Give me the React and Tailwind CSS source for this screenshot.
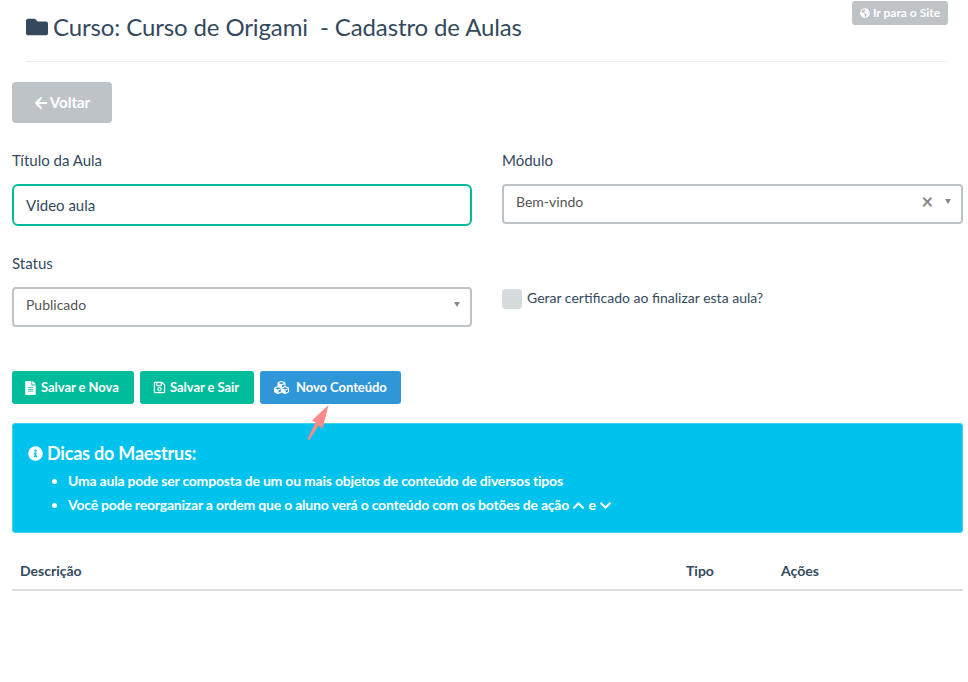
import { FaFolder, FaArrowLeft, FaGlobeAmericas, FaFileAlt, FaRegSave, FaCubes, FaInfoCircle, FaChevronUp, FaChevronDown } from 'react-icons/fa'

function Field({ label, className = '', children }) {
  return (
    <div className={className}>
      <label className="block text-[15px] leading-[20px] text-[#34495e] mb-[14px]">{label}</label>
      {children}
    </div>
  )
}

function SelectBox({ value, clearable = false }) {
  return (
    <div className="h-[40px] border-2 border-[#bdc3c7] rounded-[4px] flex items-center pl-3 pr-[5px] pb-[6px] text-[14px] text-[#555]">
      <span className="flex-1">{value}</span>
      {clearable && <span className="text-[20px] font-bold text-[#888] mr-[12px] leading-none">×</span>}
      <span className="w-0 h-0 border-x-[3.5px] border-x-transparent border-t-[5px] border-t-[#888] mr-[5px]" />
    </div>
  )
}

function ActionButton({ icon, label, className = '' }) {
  return (
    <button className={`h-[33px] rounded-[3px] text-white text-[13px] font-bold tracking-[-0.05px] flex items-center ${className}`}>
      {icon}
      {label}
    </button>
  )
}

export default function App() {
  return (
    <div className="relative w-[968px] h-[682px] bg-white overflow-hidden font-['Lato','Open_Sans',sans-serif] text-[#34495e]">
      {/* Header */}
      <div className="ml-[26px] mr-[20px] h-[62px] border-b border-[#eeeeee] flex items-start justify-between">
        <h1 className="mt-[12px] flex items-center text-[24px] leading-[30px] font-normal tracking-[-0.12px] whitespace-pre">
          <FaFolder className="w-[22px] h-[22px] mr-[5px]" />
          Curso: Curso de Origami  - Cadastro de Aulas
        </h1>
        <button className="mt-[1px] w-[96px] h-[24px] rounded-[3px] bg-[#bdc3c7] text-white text-[12px] font-bold flex items-center justify-center gap-[3px]">
          <FaGlobeAmericas className="w-[10px] h-[10px]" />
          Ir para o Site
        </button>
      </div>

      <div className="pl-[12px] pr-[5px]">
        <button className="mt-[20px] w-[100px] h-[41px] rounded-[4px] bg-[#bdc3c7] text-white text-[15px] font-bold flex items-center justify-center gap-[2px]">
          <FaArrowLeft className="w-[14px] h-[14px]" />
          Voltar
        </button>

        {/* Form */}
        <div className="mt-[27px] flex gap-[30px]">
          <Field label="Título da Aula" className="w-[460px]">
            <div className="h-[42px] border-2 border-[#00bc9b] rounded-[6px] flex items-center px-3 text-[15px] text-[#34495e]">Video aula</div>
          </Field>
          <Field label="Módulo" className="flex-1">
            <SelectBox value="Bem-vindo" clearable />
          </Field>
        </div>

        <div className="mt-[27px] flex gap-[30px]">
          <Field label="Status" className="w-[460px]">
            <SelectBox value="Publicado" />
          </Field>
          <div className="flex-1 flex items-start gap-[5px] pt-[36px] h-[64px] text-[14px] leading-[20px]">
            <span className="w-[20px] h-[20px] rounded-[4px] bg-[#d6dbdd]" />
            <span className="-mt-[1px]">Gerar certificado ao finalizar esta aula?</span>
          </div>
        </div>

        {/* Buttons */}
        <div className="mt-[44px] flex gap-[6px]">
          <ActionButton className="w-[122px] bg-[#00bc9b] pl-[12px] gap-[4px]" icon={<FaFileAlt className="w-[13px] h-[14px]" />} label="Salvar e Nova" />
          <ActionButton className="w-[114px] bg-[#00bc9b] pl-[13px] gap-[4px]" icon={<FaRegSave className="w-[13px] h-[13px]" />} label="Salvar e Sair" />
          <ActionButton className="w-[141px] bg-[#2f97d8] pl-[13px] gap-[6px]" icon={<FaCubes className="w-[17px] h-[15px]" />} label="Novo Conteúdo" />
        </div>

        {/* Tips */}
        <div className="mt-[19px] h-[110px] rounded-[3px] bg-[#00c3ed] border border-[#40d0f0] text-white pl-[15px] pt-[16px]">
          <h4 className="flex items-center gap-[4px] text-[18px] leading-[26px] font-bold tracking-[-0.2px]">
            <FaInfoCircle className="w-[15px] h-[15px]" />
            Dicas do Maestrus:
          </h4>
          <ul className="mt-[3px] ml-[25px] list-disc pl-[15px] text-[14px] font-bold leading-[24px] tracking-[-0.21px]">
            <li>Uma aula pode ser composta de um ou mais objetos de conteúdo de diversos tipos</li>
            <li>
              Você pode reorganizar a ordem que o aluno verá o conteúdo com os botões de ação{' '}
              <FaChevronUp className="inline w-[13px] h-[13px] align-[-2px]" /> e{' '}
              <FaChevronDown className="inline w-[13px] h-[13px] align-[-2px]" />
            </li>
          </ul>
        </div>

        {/* Table header */}
        <div className="mt-[26px] h-[32px] border-b-2 border-[#dddddd] flex text-[14px] font-bold leading-[24px] pl-[8px]">
          <span className="w-[666px]">Descrição</span>
          <span className="w-[95px]">Tipo</span>
          <span>Ações</span>
        </div>
      </div>

      {/* Annotation arrow */}
      <svg className="absolute left-[300px] top-[400px]" width="40" height="46" viewBox="0 0 40 46">
        <path d="M28.500 5 L22.500 29 L18.500 25.500 L9.500 40 L7.500 39 L15.500 22.500 L12 20.500 Z" fill="#fb8a8a" />
      </svg>
    </div>
  )
}
